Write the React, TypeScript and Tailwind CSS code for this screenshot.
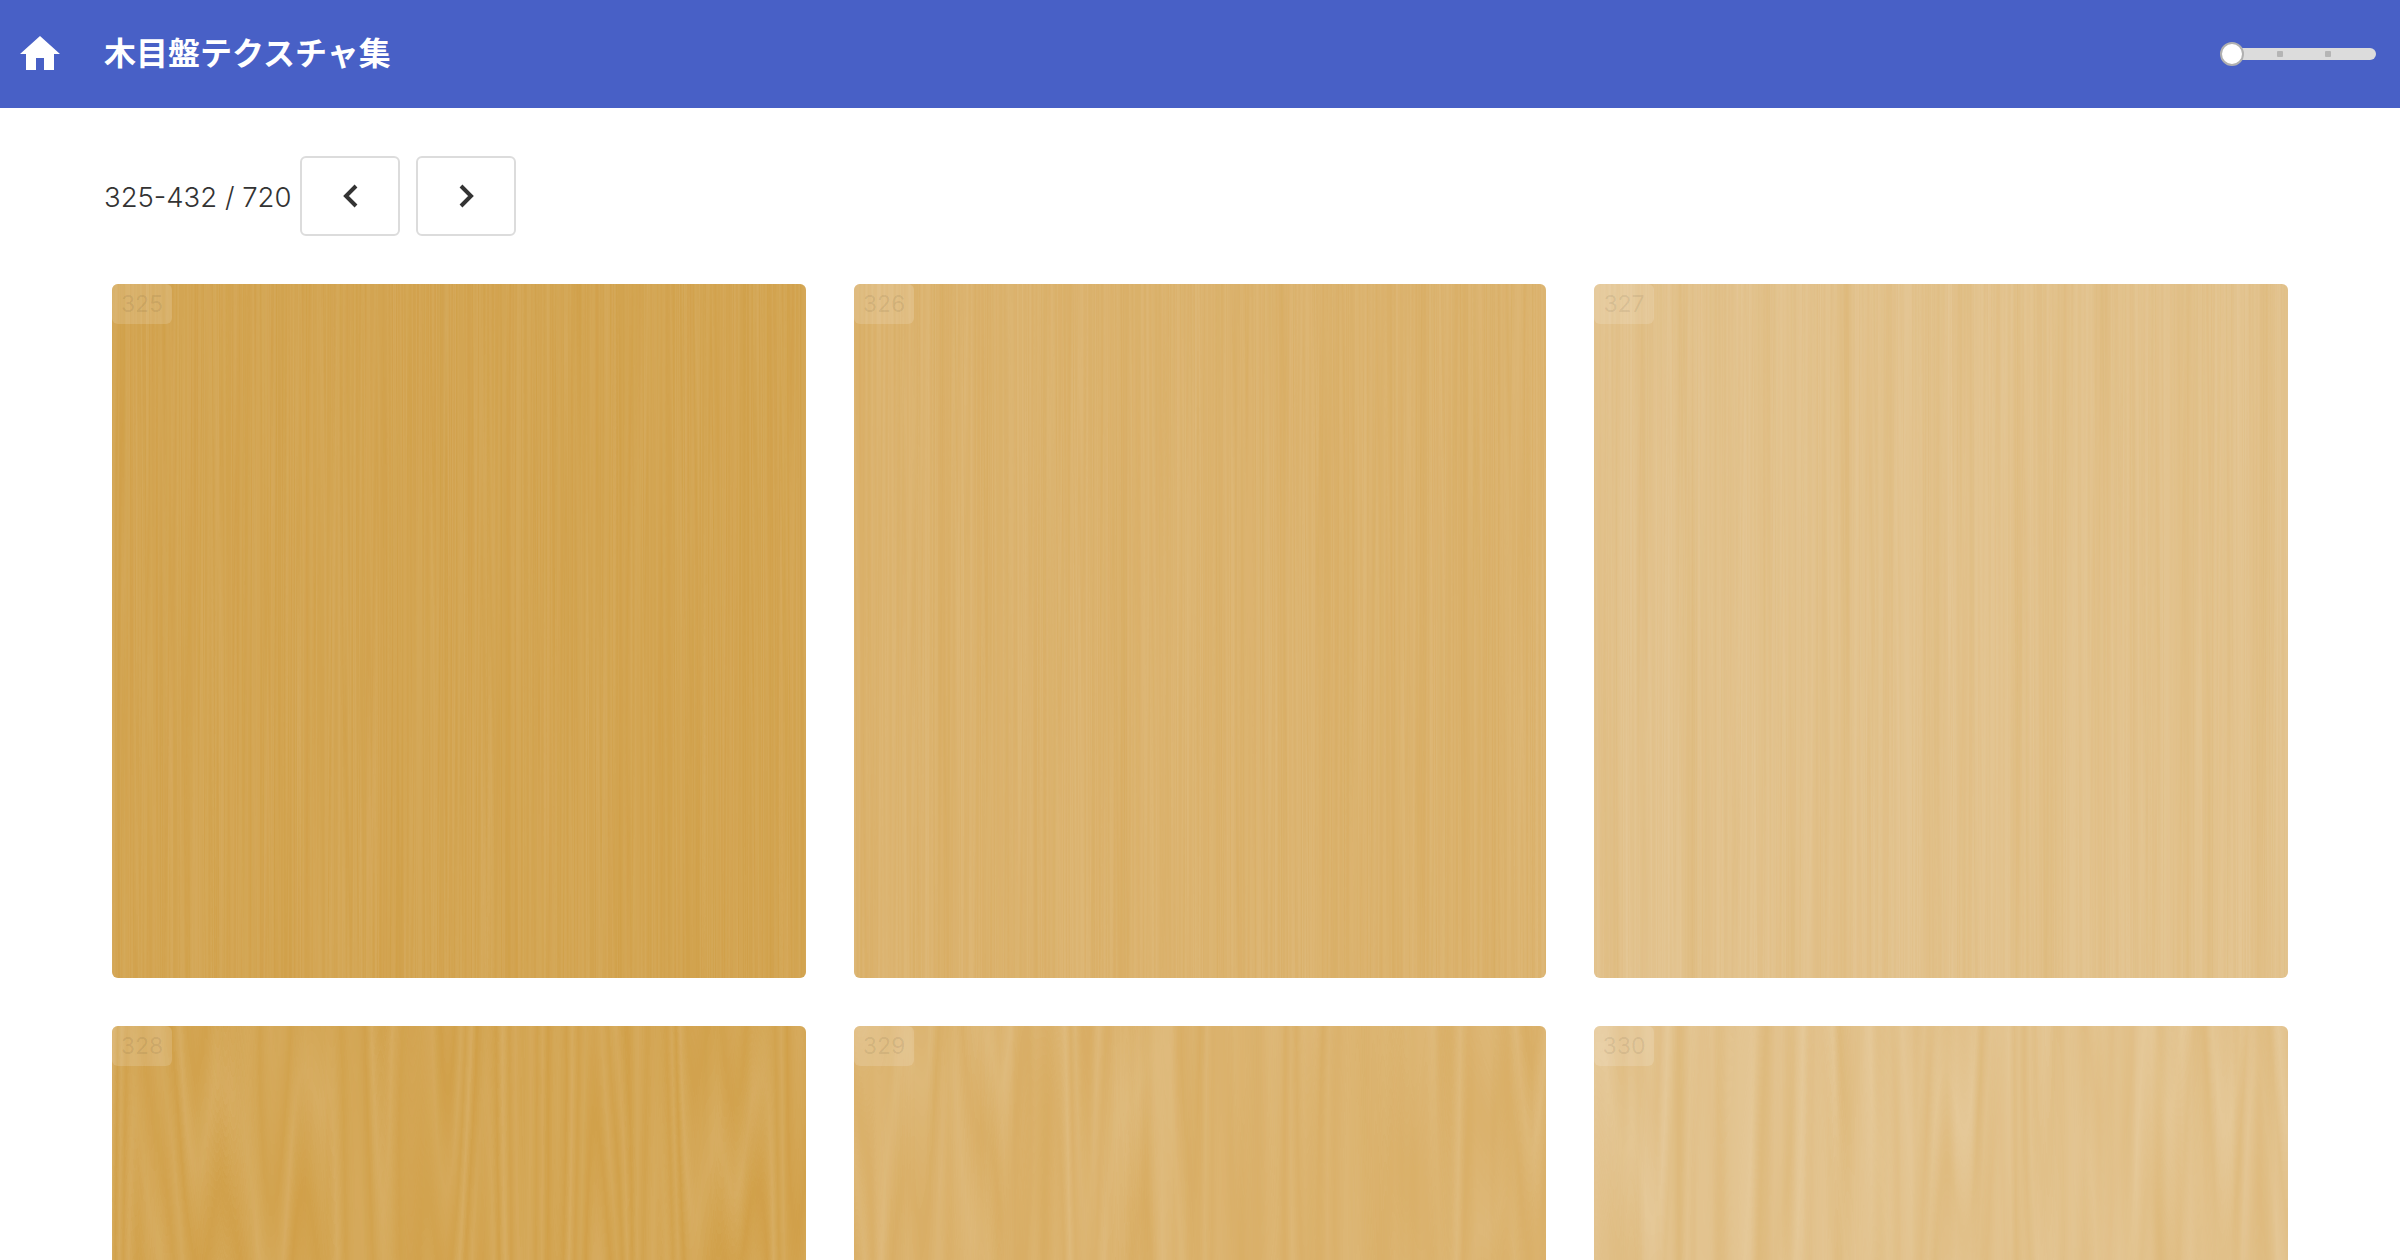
import React from 'react';

const FONT = '"Hiragino Sans", Inter, "Noto Sans CJK JP", sans-serif';

interface Panel {
    no: number;
    base: string;
    grain: 'fine' | 'flame';
    seed: number;
}

const panels: Panel[] = [
    { no: 325, base: '#d1a14b', grain: 'fine', seed: 11 },
    { no: 326, base: '#dab069', grain: 'fine', seed: 27 },
    { no: 327, base: '#e1c089', grain: 'fine', seed: 43 },
    { no: 328, base: '#d1a14b', grain: 'flame', seed: 5 },
    { no: 329, base: '#dab069', grain: 'flame', seed: 18 },
    { no: 330, base: '#e1c089', grain: 'flame', seed: 36 },
];

const WoodGrain: React.FC<{ panel: Panel }> = ({ panel }) => {
    const { no, base, grain, seed } = panel;
    const fine = grain === 'fine';
    return (
        <svg className="block h-[694px] w-full" xmlns="http://www.w3.org/2000/svg">
            <defs>
                <filter id={`rings-${no}`} x="0" y="0" width="100%" height="100%" colorInterpolationFilters="sRGB">
                    <feTurbulence
                        type="fractalNoise"
                        baseFrequency={fine ? '0.1 0.0005' : '0.014 0.0007'}
                        numOctaves={fine ? 3 : 2}
                        seed={seed}
                    />
                    <feColorMatrix values="0 0 0 0 1  0 0 0 0 1  0 0 0 0 1  1 0 0 0 0" />
                    <feComponentTransfer>
                        <feFuncA
                            type="table"
                            tableValues={
                                fine
                                    ? '0 0.05 0.1 0.03 0.09 0.01 0.08 0.02 0.1 0.01 0.07 0'
                                    : '0 0 0.11 0.02 0.12 0 0.1 0.02 0.13 0 0.1 0.02 0.12 0 0.1 0'
                            }
                        />
                    </feComponentTransfer>
                </filter>
                <filter id={`shade-${no}`} x="0" y="0" width="100%" height="100%" colorInterpolationFilters="sRGB">
                    <feTurbulence
                        type="fractalNoise"
                        baseFrequency="0.05 0.0006"
                        numOctaves={2}
                        seed={seed + 3}
                    />
                    <feColorMatrix values="0 0 0 0 0.8  0 0 0 0 0.58  0 0 0 0 0.2  0 1 0 0 -0.4" />
                    <feComponentTransfer>
                        <feFuncA type="linear" slope={0.4} />
                    </feComponentTransfer>
                </filter>
            </defs>
            <rect width="100%" height="100%" fill={base} />
            <rect width="100%" height="100%" filter={`url(#rings-${no})`} />
            <rect width="100%" height="100%" filter={`url(#shade-${no})`} />
        </svg>
    );
};

const WoodCard: React.FC<{ panel: Panel }> = ({ panel }) => (
    <div className="relative overflow-hidden rounded-[6px]">
        <WoodGrain panel={panel} />
        <span className="absolute left-0 top-0 flex h-10 w-[60px] items-center justify-center rounded-[6px] bg-white/15 text-[23px] text-black/[0.08]">
            {panel.no}
        </span>
    </div>
);

const App: React.FC = () => {
    return (
        <div className="h-[1260px] overflow-hidden bg-white" style={{ fontFamily: FONT }}>
            {/* Header */}
            <header className="flex h-[108px] items-center justify-between bg-[#4860c6] pl-4 pr-6">
                <div className="flex items-center gap-10">
                    <svg width="48" height="48" viewBox="0 0 24 24" fill="#fff">
                        <path d="M10 20v-6h4v6h5v-8h3L12 3 2 12h3v8z" />
                    </svg>
                    <h1 className="text-[32px] font-bold leading-none text-white">木目盤テクスチャ集</h1>
                </div>
                <div className="relative h-3 w-[144px] rounded-r-full bg-[#dcdcdc]">
                    <span className="absolute left-[45px] top-[3px] size-1.5 rounded-[1px] bg-[#b5b5b5]" />
                    <span className="absolute left-[93px] top-[3px] size-1.5 rounded-[1px] bg-[#b5b5b5]" />
                    <span className="absolute -left-3 -top-1.5 size-6 rounded-full border-2 border-[#b0b0b0] bg-white" />
                </div>
            </header>

            {/* Pager */}
            <div className="mt-12 flex h-20 items-center pl-[104px]">
                <span className="mr-2 mt-1 w-[188px] whitespace-nowrap text-[27.5px] font-light text-[#333]">325-432 / 720</span>
                <button className="flex h-20 w-[100px] items-center justify-center rounded-[6px] border-2 border-[#dcdcdc] bg-white">
                    <svg width="24" height="32" viewBox="0 0 24 32" fill="none" stroke="#333" strokeWidth="4">
                        <path d="M18 6L8 16l10 10" />
                    </svg>
                </button>
                <button className="ml-4 flex h-20 w-[100px] items-center justify-center rounded-[6px] border-2 border-[#dcdcdc] bg-white">
                    <svg width="24" height="32" viewBox="0 0 24 32" fill="none" stroke="#333" strokeWidth="4">
                        <path d="M7 6l10 10-10 10" />
                    </svg>
                </button>
            </div>

            {/* Texture grid */}
            <div className="mt-12 grid grid-cols-[694px_692px_694px] gap-12 px-[112px]">
                {panels.map(panel => (
                    <WoodCard key={panel.no} panel={panel} />
                ))}
            </div>
        </div>
    );
};

export default App;
